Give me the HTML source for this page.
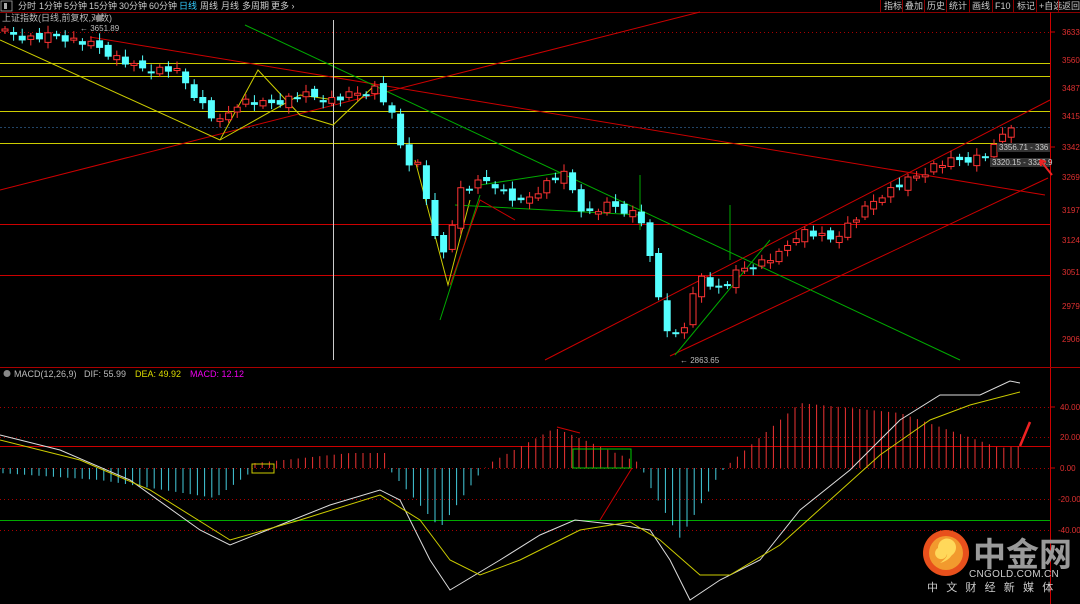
<!DOCTYPE html>
<html><head><meta charset="utf-8"><style>
html,body{margin:0;padding:0;background:#000;width:1080px;height:604px;overflow:hidden;font-family:"Liberation Sans","Noto Sans CJK SC",sans-serif}
svg{position:absolute;left:0;top:0}
</style></head><body>
<svg id="s" width="1080" height="604" xmlns="http://www.w3.org/2000/svg" font-family="Liberation Sans, Noto Sans CJK SC, sans-serif">
<rect width="1080" height="604" fill="#000"/>
<line x1="0" y1="12.5" x2="1080" y2="12.5" stroke="#8b0000"/>
<rect x="1" y="1" width="11" height="10" fill="none" stroke="#aaa" stroke-width="0.8"/>
<rect x="4" y="3" width="3" height="6" fill="#aaa"/>
<g font-size="9" fill="#ccc">
<text x="18" y="9">分时</text><text x="39" y="9">1分钟</text><text x="64" y="9">5分钟</text><text x="89" y="9">15分钟</text><text x="119" y="9">30分钟</text><text x="149" y="9">60分钟</text>
<text x="179" y="9" fill="#3cf">日线</text><text x="200" y="9">周线</text><text x="221" y="9">月线</text><text x="242" y="9">多周期</text><text x="271" y="9">更多 ›</text>
<text x="884" y="9">指标</text><text x="905" y="9">叠加</text><text x="927" y="9">历史</text><text x="949" y="9">统计</text><text x="972" y="9">画线</text><text x="995" y="9">F10</text><text x="1017" y="9">标记</text><text x="1039" y="9">+自选</text><text x="1062" y="9">返回</text>
<text x="2" y="21" fill="#bbb">上证指数(日线,前复权,对数)</text>
<text x="14" y="377" fill="#bbb">MACD(12,26,9)</text><text x="84" y="377" fill="#bbb">DIF: 55.99</text><text x="135" y="377" fill="#dd0">DEA: 49.92</text><text x="190" y="377" fill="#e0e">MACD: 12.12</text>
</g>
<g stroke="#8b0000" stroke-width="1"><line x1="880.5" y1="0" x2="880.5" y2="12"/><line x1="902.5" y1="0" x2="902.5" y2="12"/><line x1="924.5" y1="0" x2="924.5" y2="12"/><line x1="946.5" y1="0" x2="946.5" y2="12"/><line x1="969.5" y1="0" x2="969.5" y2="12"/><line x1="992.5" y1="0" x2="992.5" y2="12"/><line x1="1013.5" y1="0" x2="1013.5" y2="12"/><line x1="1036.5" y1="0" x2="1036.5" y2="12"/><line x1="1058.5" y1="0" x2="1058.5" y2="12"/></g>
<circle cx="99" cy="18" r="3.5" fill="#888"/><circle cx="7" cy="373.5" r="3.5" fill="#888"/>
<line x1="1050.5" y1="12" x2="1050.5" y2="604" stroke="#c00"/>
<line x1="0" y1="367.5" x2="1080" y2="367.5" stroke="#a00"/>
<g font-size="8" fill="#e03030" text-anchor="start">
<text x="1062" y="35">3633</text><text x="1062" y="63">3560</text><text x="1062" y="91">3487</text><text x="1062" y="119">3415</text><text x="1062" y="150">3342</text><text x="1062" y="180">3269</text><text x="1062" y="213">3197</text><text x="1062" y="243">3124</text><text x="1062" y="275">3051</text><text x="1062" y="309">2979</text><text x="1062" y="342">2906</text>
<text x="1060" y="410">40.00</text><text x="1060" y="440">20.00</text><text x="1060" y="471">0.00</text><text x="1058" y="502">-20.00</text><text x="1058" y="533">-40.00</text>
</g>
<g stroke="#c00"><line x1="1050" y1="32" x2="1055" y2="32"/><line x1="1050" y1="147" x2="1055" y2="147"/><line x1="1050" y1="407" x2="1055" y2="407"/><line x1="1050" y1="468" x2="1055" y2="468"/></g>
<line x1="0" y1="32.5" x2="1050" y2="32.5" stroke="#a00" stroke-dasharray="1,3"/>
<line x1="0" y1="127.5" x2="1050" y2="127.5" stroke="#246" stroke-dasharray="2,2"/>
<line x1="0" y1="468.5" x2="1050" y2="468.5" stroke="#a00" stroke-dasharray="1,3"/>
<line x1="0" y1="437.5" x2="1050" y2="437.5" stroke="#a00" stroke-dasharray="1,3"/>
<line x1="0" y1="407.5" x2="1050" y2="407.5" stroke="#a00" stroke-dasharray="1,3"/>
<line x1="0" y1="499.5" x2="1050" y2="499.5" stroke="#a00" stroke-dasharray="1,3"/>
<line x1="0" y1="530.5" x2="1050" y2="530.5" stroke="#a00" stroke-dasharray="1,3"/>
<g stroke-width="1"><line x1="0" y1="63.5" x2="1050" y2="63.5" stroke="#cc0"/><line x1="0" y1="76.5" x2="1050" y2="76.5" stroke="#cc0"/><line x1="0" y1="111.5" x2="1050" y2="111.5" stroke="#cc0"/><line x1="0" y1="143.5" x2="1050" y2="143.5" stroke="#cc0"/><line x1="0" y1="224.5" x2="1050" y2="224.5" stroke="#c00"/><line x1="0" y1="275.5" x2="1050" y2="275.5" stroke="#c00"/><line x1="0" y1="446.5" x2="1050" y2="446.5" stroke="#c00"/><line x1="0" y1="520.5" x2="1050" y2="520.5" stroke="#0a0"/></g>
<g stroke-width="1" fill="none">
<line x1="0" y1="190" x2="700" y2="12" stroke="#c00"/>
<line x1="90" y1="37" x2="1045" y2="195" stroke="#c00"/>
<line x1="545" y1="360" x2="1050" y2="100" stroke="#c00"/>
<line x1="670" y1="356" x2="1048" y2="178" stroke="#c00"/>
<line x1="245" y1="25" x2="960" y2="360" stroke="#0a0"/>
<line x1="0" y1="40" x2="220" y2="140" stroke="#cc0"/>
<line x1="333.5" y1="20" x2="333.5" y2="360" stroke="#ccc"/>
<polyline points="220,140 258,70 300,115 333,125 375,85" stroke="#cc0"/>
<polyline points="220,140 300,95 335,100" stroke="#cc0"/>
<polyline points="415,160 448,285 470,200" stroke="#cc0"/>
<line x1="440" y1="320" x2="480" y2="195" stroke="#0a0"/>
<line x1="455" y1="205" x2="640" y2="215" stroke="#0a0"/>
<line x1="480" y1="185" x2="565" y2="172" stroke="#0a0"/>
<line x1="640" y1="175" x2="640" y2="230" stroke="#0a0"/>
<line x1="730" y1="205" x2="730" y2="260" stroke="#0a0"/>
<line x1="675" y1="355" x2="770" y2="240" stroke="#0a0"/>
<polyline points="450,285 480,200 515,220" stroke="#c00"/>
</g>
<g id="c"></g><g id="m"></g>
<text x="80" y="31" font-size="8" fill="#bbb">← 3651.89</text>
<text x="680" y="363" font-size="8" fill="#bbb">← 2863.65</text>
<rect x="997" y="143" width="53" height="9" fill="#333"/><text x="999" y="150" font-size="8" fill="#ccc">3356.71 - 336</text>
<rect x="990" y="158" width="60" height="9" fill="#333"/><text x="992" y="165" font-size="8" fill="#ccc">3320.15 - 3320.9</text>
<path d="M1052 175 L1040 160 M1040 160 l1 6 M1040 160 l6 2" stroke="#e22" stroke-width="2" fill="none"/>
<path d="M1020 446 L1030 422" stroke="#e22" stroke-width="2.5"/>
<rect x="252" y="464" width="22" height="9" fill="none" stroke="#cc0"/>
<rect x="573" y="449" width="58" height="19" fill="none" stroke="#0c0"/>
<line x1="600" y1="520" x2="632" y2="468" stroke="#c00"/>
<line x1="557" y1="427" x2="580" y2="433" stroke="#c00"/>
<circle cx="946" cy="553" r="23" fill="#e8501c"/>
<circle cx="946" cy="553" r="17" fill="#f29a2e"/>
<path d="M938 548 a9 9 0 1 1 14 7 q-4 6 -12 8 q8 -6 7 -9 a6 6 0 1 1 -9 -6z" fill="#ffd85a"/>
<text x="973" y="566" font-size="33" font-weight="bold" fill="#9a9a9a">中金网</text>
<text x="969" y="577" font-size="10" fill="#ccc" letter-spacing="0.3">CNGOLD.COM.CN</text>
<text x="927" y="591" font-size="11" fill="#ccc" letter-spacing="8.2">中文财经新媒体</text>
</svg>
<script>
(function(){
var NS="http://www.w3.org/2000/svg";
function el(p,t,a){var e=document.createElementNS(NS,t);for(var k in a)e.setAttribute(k,a[k]);p.appendChild(e);return e;}
function interp(pts,x){for(var i=0;i<pts.length-1;i++){if(x>=pts[i][0]&&x<=pts[i+1][0]){var t=(x-pts[i][0])/(pts[i+1][0]-pts[i][0]);return pts[i][1]+t*(pts[i+1][1]-pts[i][1]);}}return pts[pts.length-1][1];}
var P=[[5,33],[30,38],[60,36],[100,48],[135,68],[175,70],[195,95],[218,125],[240,100],[265,105],[300,95],[335,100],[375,88],[390,110],[405,160],[420,165],[440,265],[450,230],[460,190],[490,180],[520,205],[550,180],[565,175],[585,215],[610,205],[640,215],[650,260],[665,325],[680,340],[700,275],[720,290],[740,270],[780,255],[800,230],[830,240],[860,215],[880,195],[910,180],[935,165],[960,160],[990,155],[1010,122],[1020,138]];
var cg=document.getElementById('c');var step=8.6,prev=interp(P,5);
for(var i=0;i<118;i++){var x=5+i*step;var cl=interp(P,x)+((i*7)%5-2)*2;var op=prev+((i*3)%4-1.5)*2;
var up=cl<op;var tp=Math.min(cl,op),h=Math.max(2,Math.abs(cl-op));
el(cg,'line',{x1:x,x2:x,y1:tp-3-(i%3)*2,y2:tp+h+3+(i%2)*3,stroke:up?'#f33':'#5ff','stroke-width':1});
if(up)el(cg,'rect',{x:x-3,y:tp,width:6,height:h,fill:'#000',stroke:'#f33','stroke-width':1});
else el(cg,'rect',{x:x-3.5,y:tp,width:7,height:h,fill:'#5ff'});
prev=cl;}
var H=[[0,-5],[100,-12],[215,-30],[250,-5],[255,5],[350,15],[385,15],[392,-5],[440,-60],[480,-5],[490,5],[555,40],[640,5],[648,-15],[680,-70],[720,-5],[730,5],[800,65],[900,55],[1000,20],[1020,22]];
var m=document.getElementById('m');
for(var xx=3;xx<1022;xx+=7.2){var v=interp(H,xx);el(m,'line',{x1:xx,x2:xx,y1:468,y2:468-v,stroke:v>0?'#e33':'#4cd','stroke-width':1});}
var D=[[0,435],[60,450],[130,480],[200,530],[230,545],[280,525],[330,505],[380,490],[400,500],[430,560],[450,590],[500,560],[540,535],[575,520],[620,525],[650,530],[670,560],[690,600],[720,580],[760,560],[800,510],[850,470],[900,420],[940,395],[980,395],[1010,381],[1020,383]];
var E=[[0,440],[80,460],[150,490],[230,540],[300,520],[380,495],[420,520],[450,560],[480,575],[520,560],[580,530],[630,522],[660,540],[700,575],[730,575],[780,545],[830,500],[880,455],[930,420],[970,405],[1020,392]];
el(m,'polyline',{points:D.map(function(p){return p.join(',')}).join(' '),fill:'none',stroke:'#ddd','stroke-width':1});
el(m,'polyline',{points:E.map(function(p){return p.join(',')}).join(' '),fill:'none',stroke:'#cc0','stroke-width':1});
})();
</script>
</body></html>
